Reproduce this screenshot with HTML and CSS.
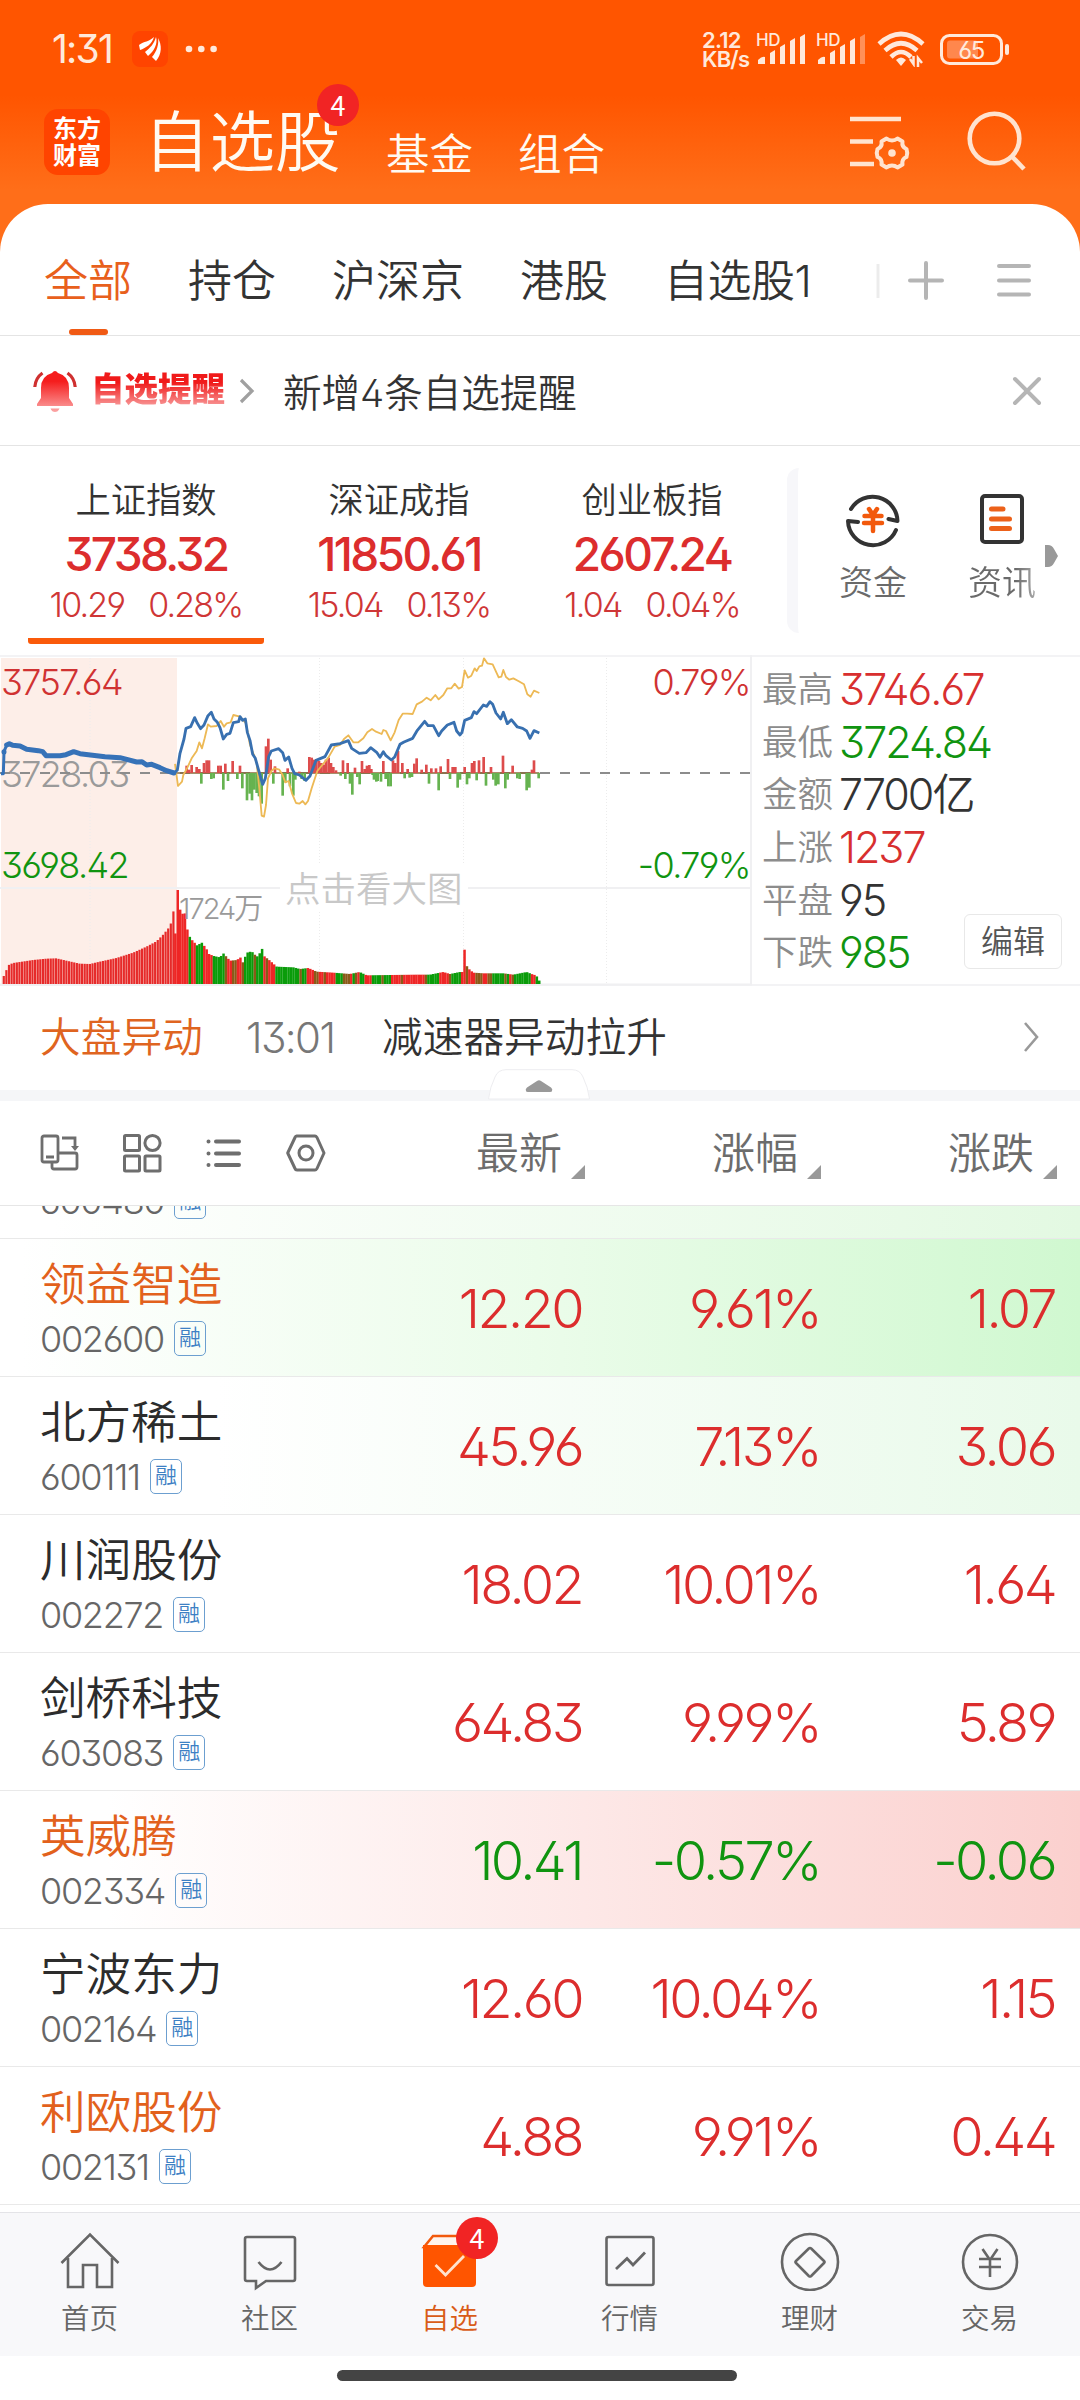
FILE: index.html
```html
<!DOCTYPE html>
<html lang="zh-CN">
<head>
<meta charset="utf-8">
<title>自选股</title>
<link rel="stylesheet" href="styles.css">
</head>
<body>
<header class="top">
  <div class="status">
    <span class="clock">1:31</span>
    <svg class="status-left" width="90" height="36" viewBox="0 0 90 36">
      <rect width="36" height="36" rx="8" fill="#ff4400"/>
      <path d="M7 14C12 10 17 11 22 6C20 13 14 17 8 19ZM13 21C18 17 22 13 24 6C26 13 22 20 16 25ZM20 26C25 20 27 13 26 7C30 14 30 23 24 30Z" fill="#fff"/>
      <g fill="#ffe9db"><circle cx="57" cy="18" r="3.3"/><circle cx="69.300" cy="18" r="3.300"/><circle cx="81.600" cy="18" r="3.300"/></g>
    </svg>
    <span class="speed">2.12<br>KB/s</span>
    <span class="hd">HD</span>
    <svg class="signal" width="50" height="32" viewBox="0 0 50 32" fill="#ffe9db">
      <path d="M2 31V27Q6 23 9 24V31ZM14 31V20L19 17V31ZM24 31V14L29 11V31ZM34 31V8L39 5V31ZM44 31V4L49 1V31Z"/>
    </svg>
    <span class="hd">HD</span>
    <svg class="signal" width="50" height="32" viewBox="0 0 50 32" fill="#ffe9db">
      <path d="M2 31V27Q6 23 9 24V31ZM14 31V20L19 17V31ZM24 31V14L29 11V31ZM34 31V8L39 5V31Z"/><path opacity=".4" d="M44 31V4L49 1V31Z"/>
    </svg>
    <svg class="wifi" width="48" height="36" viewBox="0 0 48 36" fill="none" stroke="#ffe9db" stroke-width="4.600">
      <path d="M2 13Q24 -7 46 13M8 19.500Q24 5 40 19.500M14 26Q24 16 34 26"/>
      <path d="M19 29Q24 24 29 29L24 35Z" fill="#ffe9db" stroke="none"/>
      <path d="M33 28L36.500 33V25M41 36V27L45 32" stroke-width="2.500"/>
    </svg>
    <svg class="battery" width="70" height="32" viewBox="0 0 70 32">
      <rect x="1.500" y="1.500" width="60" height="28" rx="8" fill="none" stroke="#ffe9db" stroke-width="3"/>
      <rect x="7" y="6.500" width="31" height="18" rx="3" fill="#ff874d"/>
      <rect x="65" y="10" width="4" height="11" rx="2" fill="#ffe9db"/>
      <text x="31" y="24.500" text-anchor="middle" font-size="24" fill="#ffe9db">65</text>
    </svg>
  </div>
  <div class="titles">
    <div class="logo">东方<br>财富</div>
    <h1>自选股<i class="badge">4</i></h1>
    <span class="mode m1">基金</span>
    <span class="mode m2">组合</span>
    <svg class="top-icons" width="182" height="64" viewBox="0 0 182 64" fill="none" stroke="#ffe3cf" stroke-width="4.600">
      <path d="M2 9H53M2 31.500H25M2 54H26"/>
      <path stroke-width="4" stroke-linejoin="round" d="M44 30.500Q47 30.500 49.500 28.500L54.500 31.500Q53.500 37 58.500 39Q60 43 58.500 47Q53.500 49 54.500 54.500L49.500 57.500Q47 55.500 44 55.500Q41 55.500 38.500 57.500L33.500 54.500Q34.500 49 29.500 47Q28 43 29.500 39Q34.500 37 33.500 31.500L38.500 28.500Q41 30.500 44 30.500Z"/>
      <circle cx="44" cy="43" r="3.800" fill="#ffe3cf" stroke="none"/>
      <circle cx="146.500" cy="28.500" r="24.800"/><path d="M163.500 46L176 59"/>
    </svg>
  </div>
</header>

<main class="panel">
  <nav class="tabs">
    <span class="tab on">全部</span><span class="tab">持仓</span><span class="tab">沪深京</span><span class="tab">港股</span><span class="tab">自选股1</span>
    <svg class="tab-tools" width="160" height="44" viewBox="0 0 160 44" fill="none" stroke="#b5b5b5" stroke-width="4" stroke-linecap="round">
      <path d="M3 6V40" stroke="#ececec" stroke-width="3" stroke-linecap="butt"/>
      <path d="M35 22.500H67M51 5V40M124 8H154M124 22.500H154M124 36.500H154"/>
    </svg>
  </nav>

  <section class="notice">
    <svg width="44" height="44" viewBox="0 0 44 44">
      <defs><linearGradient id="red" x1="0" y1="0" x2="0" y2="1"><stop offset=".25" stop-color="#f51d1d"/><stop offset="1" stop-color="#fba6a6"/></linearGradient></defs>
      <path fill="url(#red)" d="M19 4Q22 0 25 4Q36 7 36 19V29L40 35V37H4V35L8 29V19Q8 7 19 4ZM17.500 39.500H26.500Q25 43 22 43Q19 43 17.500 39.500Z"/>
      <path d="M9.500 4Q2.500 9 1.800 18M34.500 4Q41.500 9 42.200 18" fill="none" stroke="#cf3030" stroke-width="3.200"/>
    </svg>
    <b>自选提醒</b>
    <svg class="go" width="16" height="26" viewBox="0 0 16 26" fill="none" stroke="#a0a0a0" stroke-width="3.200"><path d="M2 2L13 13L2 24"/></svg>
    <span class="notice-text">新增4条自选提醒</span>
    <svg class="close" width="30" height="30" viewBox="0 0 30 30" stroke="#b5b5b5" stroke-width="4" stroke-linecap="round"><path d="M3 3L27 27M27 3L3 27"/></svg>
  </section>

  <section class="indices">
    <div class="index on"><h3>上证指数</h3><strong>3738.32</strong><p><span>10.29</span><span>0.28%</span></p></div>
    <div class="index"><h3>深证成指</h3><strong>11850.61</strong><p><span>15.04</span><span>0.13%</span></p></div>
    <div class="index"><h3>创业板指</h3><strong>2607.24</strong><p><span>1.04</span><span>0.04%</span></p></div>
    <div class="shortcuts">
      <div class="shortcut">
        <svg width="58" height="58" viewBox="0 0 58 58" fill="none" stroke="#333" stroke-width="4" stroke-linejoin="round" stroke-linecap="round">
          <path d="M7 19A25 25 0 0 1 53.500 31L44.500 29M52 40A25 25 0 0 1 4 31L14 32"/>
          <path stroke="#f2590c" stroke-width="4.500" d="M25 19L29 25L33 19M20.500 26H37.500M20 33H38M29 25V41"/>
        </svg><span>资金</span>
      </div>
      <div class="shortcut news">
        <svg width="58" height="58" viewBox="0 0 58 58" fill="none" stroke="#333" stroke-width="4" stroke-linecap="round">
          <rect x="9" y="6" width="40" height="46" rx="3"/><path stroke="#ec611a" stroke-width="5" d="M18.500 19H30M18.500 29H36.500M18.500 38.500H36.500"/>
        </svg><span>资讯</span>
      </div>
      <svg class="more" width="14" height="22" viewBox="0 0 14 22"><path d="M0 0H3Q7 0 9 4L13 11L9 18Q7 22 3 22H0Z" fill="#999"/></svg>
    </div>
  </section>

  <section class="market">
    <svg class="chart" width="752" height="331" viewBox="0 655 752 331">
      <rect x="1" y="658" width="176" height="326" fill="#fdeee8"/>
      <path d="M0 888H280M468 888H751M0 984.500H752M751 655V985" stroke="#f0f0f2" stroke-width="2" fill="none"/>
      <path d="M90 658V984M319.500 658V864M319.500 912V984M463.500 658V864M463.500 912V984M606.500 658V984" stroke="#ececec" stroke-dasharray="1 2" fill="none"/>
      <text x="1" y="695" class="up">3757.64</text>
      <text x="1" y="787" class="flat">3728.03</text>
      <text x="1" y="878" class="down">3698.42</text>
      <text x="750" y="695" class="up" text-anchor="end">0.79%</text>
      <text x="750" y="878" class="down" text-anchor="end">-0.79%</text>
      <path d="M0 773H752" stroke="#8c8c8c" stroke-width="2" stroke-dasharray="10 10"/>
      <g id="bars" transform="translate(0 645) scale(.33333)"></g>
      <g transform="translate(0 645) scale(.33333)" fill="none" stroke-linejoin="round">
        <path stroke="#edb955" stroke-width="5.500" d="M525 357L534 423L546 410L550 390L562 368L575 340L590 318L598 292L606 310L614 280L624 238L632 245L650 243L662 228L672 245L680 235L692 232L700 210L720 215L738 235L750 300L762 330L770 355L778 430L785 512L792 515L798 480L804 400L814 378L824 370L838 374L848 390L856 412L866 408L876 445L888 474L898 476L908 468L916 478L924 468L935 430L952 378L985 338L1004 305L1020 300L1032 282L1045 271L1060 292L1075 292L1090 280L1102 262L1116 252L1128 260L1145 267L1150 255L1158 258L1172 286L1184 262L1196 225L1208 206L1222 206L1238 207L1250 178L1266 170L1280 158L1292 166L1306 150L1316 163L1330 150L1342 130L1354 130L1364 116L1376 131L1386 126L1394 76L1404 98L1414 92L1424 70L1430 78L1438 64L1446 62L1452 40L1462 55L1478 58L1496 97L1504 95L1510 75L1518 96L1528 104L1540 100L1555 108L1572 118L1582 148L1592 155L1602 137L1618 144"/>
        <path stroke="#3870b0" stroke-width="8.500" d="M525 382L532 375L540 325L552 282L558 250L572 245L584 218L592 235L602 251L612 240L624 212L634 202L642 222L652 232L660 248L670 282L680 268L690 265L700 233L716 230L720 215L728 226L736 222L742 262L750 286L758 328L766 340L776 376L788 418L796 400L806 335L814 318L836 311L848 323L855 346L866 336L876 370L884 386L898 390L918 406L930 393L948 346L975 335L994 300L1020 296L1045 287L1055 310L1078 325L1098 323L1112 308L1130 322L1140 337L1150 320L1158 332L1174 345L1184 336L1200 298L1212 291L1238 280L1252 256L1274 229L1284 242L1300 242L1316 272L1325 258L1342 240L1362 232L1370 258L1380 270L1386 262L1394 226L1414 218L1422 200L1430 206L1450 180L1460 184L1470 170L1478 178L1488 204L1502 222L1510 202L1522 236L1534 224L1552 246L1568 250L1580 258L1590 280L1602 257L1618 264"/>
        <path stroke="#3672b8" stroke-width="9" d="M3 386H10L12 320L20 300"/>
        <path stroke="#3672b8" stroke-width="15" stroke-linecap="round" d="M12 320V321M20 300L28 296L38 301L60 303L80 313L115 317L128 320L138 332L180 332L198 329L221 320L240 326L315 335L360 338L410 351L426 350L440 360L455 358L480 368L500 377L522 384"/>
      </g>
      <text x="179" y="919" class="volume">1724万</text>
      <text x="285" y="902" class="hint">点击看大图</text>
    </svg>
    <dl class="stats">
      <dt>最高</dt><dd class="up">3746.67</dd>
      <dt>最低</dt><dd class="down">3724.84</dd>
      <dt>金额</dt><dd>7700亿</dd>
      <dt>上涨</dt><dd class="up">1237</dd>
      <dt>平盘</dt><dd>95</dd>
      <dt>下跌</dt><dd class="down">985</dd>
    </dl>
    <button class="edit">编辑</button>
  </section>

  <section class="flash">
    <span class="flash-tag">大盘异动</span><time>13:01</time><span class="flash-text">减速器异动拉升</span>
    <svg class="flash-go" width="16" height="30" viewBox="0 0 16 30" fill="none" stroke="#999" stroke-width="2.600"><path d="M2 1L14 15L2 29"/></svg>
    <svg class="handle" width="102" height="32" viewBox="0 0 102 32"><path d="M.5 30Q2 18 7 8Q10 .7 18 .7H84Q92 .7 95 8Q100 18 101.500 30Z" fill="#fff" stroke="#ededf0"/><path d="M38 22Q37 20 39 18.500L49 12Q51 10.500 53 12L63 18.500Q65 20 64 22Q64 23 62 23H40Q38 23 38 22Z" fill="#999"/></svg>
  </section>

  <section class="table-head">
    <div class="tools">
      <svg width="40" height="40" viewBox="0 0 40 40" fill="none" stroke="#6e6e6e" stroke-width="2.800"><rect x="2" y="3" width="16" height="26" rx="2"/><path d="M6 24H14M12 30V34Q12 36 14 36H35Q37 36 37 34V22Q37 20 35 20H19M22 5H35V13"/><path d="M31 13H39L35 18Z" fill="#6e6e6e" stroke="none"/></svg>
      <svg width="40" height="40" viewBox="0 0 40 40" fill="none" stroke="#6e6e6e" stroke-width="3"><rect x="2.500" y="2.500" width="15" height="15" rx="1"/><circle cx="30.500" cy="10" r="7.600"/><rect x="2.500" y="23" width="15" height="15" rx="1"/><rect x="23" y="23" width="15" height="15" rx="1"/></svg>
      <svg width="40" height="40" viewBox="0 0 40 40" fill="none" stroke="#6e6e6e" stroke-width="4" stroke-linecap="round"><path d="M12 8.500H35M12 20.500H35M12 32H35M4.500 8.500V8.600M4.500 20.500V20.600M4.500 32V32.100"/></svg>
      <svg width="40" height="40" viewBox="0 0 40 40" fill="none" stroke="#6e6e6e" stroke-width="3" stroke-linejoin="round"><path d="M10.500 3H29Q30 3 31 4.500L38 20L31 35.500Q30 37 29 37H11Q9.500 37 9 35.500L1.700 20L9 4.500Q9.500 3 10.500 3Z"/><circle cx="20" cy="20" r="7"/></svg>
    </div>
    <span class="sort c1">最新</span><span class="sort c2">涨幅</span><span class="sort c3">涨跌</span>
  </section>

  <section class="list">
    <div class="row first"><div class="name"><p>600480<em>融</em></p></div></div>
    <div class="row green held"><div class="name"><h2>领益智造</h2><p>002600<em>融</em></p></div><b>12.20</b><b>9.61%</b><b>1.07</b></div>
    <div class="row pale"><div class="name"><h2>北方稀土</h2><p>600111<em>融</em></p></div><b>45.96</b><b>7.13%</b><b>3.06</b></div>
    <div class="row"><div class="name"><h2>川润股份</h2><p>002272<em>融</em></p></div><b>18.02</b><b>10.01%</b><b>1.64</b></div>
    <div class="row"><div class="name"><h2>剑桥科技</h2><p>603083<em>融</em></p></div><b>64.83</b><b>9.99%</b><b>5.89</b></div>
    <div class="row pink held fall"><div class="name"><h2>英威腾</h2><p>002334<em>融</em></p></div><b>10.41</b><b>-0.57%</b><b>-0.06</b></div>
    <div class="row"><div class="name"><h2>宁波东力</h2><p>002164<em>融</em></p></div><b>12.60</b><b>10.04%</b><b>1.15</b></div>
    <div class="row held"><div class="name"><h2>利欧股份</h2><p>002131<em>融</em></p></div><b>4.88</b><b>9.91%</b><b>0.44</b></div>
  </section>
</main>

<footer class="bottom">
  <nav>
    <a><svg width="60" height="60" viewBox="0 0 60 60"><path d="M1.500 32L30 3.500L58.500 32M8 27V56H23V34H37V56H52V27"/></svg>首页</a>
    <a><svg width="60" height="60" viewBox="0 0 60 60"><path d="M7 6H53Q55 6 55 8V48Q55 50 53 50H26L16 57V50H7Q5 50 5 48V8Q5 6 7 6Z"/><path d="M18.500 31Q30 46 41.500 31"/></svg>社区</a>
    <a class="on"><svg width="60" height="60" viewBox="0 0 60 60"><path d="M4 16L13 5H47L55 16Z" fill="#fff4ed" stroke="#f2590c" stroke-width="2.500"/><path d="M3 14H56V52Q56 56 52 56H7Q3 56 3 52Z" fill="#f50" stroke="none"/><path d="M15.500 34L25.500 44L44 25" stroke="#ffe3cf" stroke-width="2.800"/></svg>自选<i class="badge">4</i></a>
    <a><svg width="60" height="60" viewBox="0 0 60 60"><rect x="6.500" y="6" width="47" height="48" rx="2"/><path d="M16 38L27 27.500L33 34L45 21.500" stroke-width="2.800"/></svg>行情</a>
    <a><svg width="60" height="60" viewBox="0 0 60 60"><circle cx="30" cy="31" r="28"/><path d="M28.800 17.500Q30 16.500 31.200 17.500L44 30Q45 31 44 32L31.200 45Q30 46 28.800 45L16 32Q15 31 16 30Z"/></svg>理财</a>
    <a><svg width="60" height="60" viewBox="0 0 60 60"><circle cx="30" cy="31" r="27"/><path d="M22.500 18L30 29L37.500 18M19 28H41M19 36H41M30 29V46"/></svg>交易</a>
  </nav>
  <div class="gesture"></div>
</footer>
<script src="chart.js"></script>
</body>
</html>
```
FILE: styles.css
```css
* { box-sizing: border-box; margin: 0; padding: 0; }
body { width: 1080px; height: 2400px; overflow: hidden; background: #fff; color: #333;
  font-family: Inter, "Noto Sans CJK SC", sans-serif; font-weight: 350; font-feature-settings: "ss01"; }
h1, h2, h3, b, i, em { font-weight: 350; font-style: normal; }
svg { display: block; flex: none; }
.up { color: #d82f2f; fill: #d03232; }
.down { color: #109410; fill: #109410; }

.top { height: 254px; background: linear-gradient(#f50 0, #f50 95px, #ff6e19 190px); color: #fffaf2; }
.status { display: flex; height: 98px; padding: 31px 0 0 52px; color: #ffe9db; }
.clock { width: 80px; font-size: 39px; line-height: 36px; font-weight: 400; letter-spacing: -1.800px; }
.speed { width: 54px; margin-left: 480px; font-size: 22px; line-height: 19px; font-weight: 600; letter-spacing: -.8px; }
.hd { width: 0; font-size: 17px; line-height: 19px; font-weight: 500; letter-spacing: -.5px; overflow: visible; white-space: nowrap; }
.signal { margin: 2px 10px 0 0; }
.wifi { margin-left: 1px; }
.battery { margin: 3px 0 0 15px; font-weight: 400; letter-spacing: -1.500px; }
.titles { display: flex; height: 106px; padding-left: 44px; }
.logo { width: 66px; height: 66px; margin-top: 11px; padding-top: 6px; border-radius: 14px; background: #ff4400; color: #fff; font-size: 24px; line-height: 27px; font-weight: 700; text-align: center; }
h1 { position: relative; width: 242px; margin-left: 34px; padding-top: 3px; font-size: 65.500px; line-height: 84px; }
.badge { position: absolute; width: 42px; height: 42px; border-radius: 50%; background: #f12424; color: #fff; font-size: 27px; line-height: 42px; text-align: center; font-weight: 400; font-family: "Noto Sans CJK SC", sans-serif; }
h1 .badge { left: 173px; top: -14px; }
.mode { width: 132px; padding-top: 30px; font-size: 43.500px; line-height: 52px; }
.m1 { padding-left: 0; }
.m2 { width: 330px; padding-left: 0; }
.top-icons { margin-top: 12px; }

.panel { position: relative; margin-top: -50px; border-radius: 48px 48px 0 0; background: #fff; }
.tabs { display: flex; height: 132px; padding: 47px 0 0 44px; border-bottom: 1.500px solid #e4e4e4; font-size: 44px; line-height: 60px; }
.tab { position: relative; margin-right: 56px; white-space: nowrap; }
.tab:nth-child(5) { letter-spacing: -.5px; width: 151px; margin-right: 0; }
.tab.on { color: #e8601c; }
.tab.on::after { content: ""; position: absolute; left: 25px; bottom: 0; width: 39px; height: 6px; border-radius: 3px; background: #f05a14; }
.tab-tools { margin: 7px 0 0 60px; }
.notice { display: flex; align-items: center; height: 110px; padding-left: 33px; border-bottom: 1.500px solid #e4e4e4; }
.notice b { width: 134px; margin: -4px 0 0 14px; font-size: 33.500px; line-height: 44px; font-weight: 900; white-space: nowrap; background: linear-gradient(#f01a1a 35%, #f89a9a 90%); -webkit-background-clip: text; color: transparent; }
.notice .go { margin-left: 14px; }
.notice-text { width: 729px; margin: -2px 0 0 28px; font-size: 38.500px; }
.indices { display: flex; height: 209px; padding: 22px 0 0 28px; }
.index { width: 236px; margin-right: 17px; height: 176px; text-align: center; white-space: nowrap; }
.index.on { border-bottom: 6px solid #fa5a0a; border-radius: 0 0 3px 3px; }
.index h3 { font-size: 35.300px; line-height: 66px; }
.index strong { display: block; font-size: 46px; line-height: 40px; font-weight: 480; letter-spacing: -2.600px; color: #dc2d2d; }
.index p { display: flex; justify-content: center; gap: 24px; font-size: 34px; line-height: 62px; letter-spacing: -1.800px; color: #cf3636; }
.shortcuts { position: relative; display: flex; width: 293px; height: 165px; border-left: 11px solid #f7f7fa; border-radius: 12px 0 0 12px; }
.shortcut { display: flex; flex-direction: column; align-items: center; width: 70px; margin: 22px 0 0 40px; font-size: 34px; line-height: 44px; color: #6a6a6a; }
.shortcut span { margin-top: 13px; }
.news { margin-left: 59px; }
.news span { background: linear-gradient(90deg, #6a6a6a 70%, #aaa); -webkit-background-clip: text; color: transparent; }
.more { position: absolute; left: 247px; top: 77px; }

.market { position: relative; display: flex; height: 331px; border-top: 2px solid #f3f3f5; border-bottom: 2px solid #f3f3f5; }
.chart { margin-top: -2px; font-size: 36px; letter-spacing: -1.600px; }
.flat, .volume { fill: #9a9a9a; }
.volume { font-size: 29px; letter-spacing: -2px; }
.hint { font-size: 35.500px; letter-spacing: 0; fill: #c8c8c8; }
.stats { display: grid; grid-template-columns: 77px 1fr; grid-auto-rows: 52.700px; padding: 6px 0 0 10px; line-height: 53px; white-space: nowrap; }
.stats dt { font-size: 35.500px; color: #8c8c8c; }
.stats dd { font-size: 43px; letter-spacing: -2px; }
.edit { position: absolute; left: 964px; top: 257px; width: 98px; height: 55px; padding-bottom: 5px; border: 1px solid #e8e8e8; border-radius: 6px; background: #fff; font: 350 32px/46px "Noto Sans CJK SC", sans-serif; color: #555; }

.flash { position: relative; display: flex; height: 115px; border-bottom: 11px solid #f5f6f8; padding-left: 40px; font-size: 40.700px; line-height: 104px; }
.flash-tag { width: 206px; color: #df6420; }
.flash time { width: 136px; font-size: 42px; letter-spacing: -1.600px; color: #777; }
.flash-text { width: 641px; }
.flash-go { margin-top: 36px; }
.handle { position: absolute; left: 488px; top: 83px; }
.table-head { display: flex; height: 105px; border-bottom: 1.500px solid #e6e6e6; background: #fff; font-size: 43px; line-height: 104px; color: #6c6c6c; }
.tools { display: flex; gap: 42px; width: 476px; padding: 32px 0 0 40px; }
.sort { position: relative; width: 109px; margin-right: 127px; white-space: nowrap; }
.sort::after { content: ""; position: absolute; right: 0; top: 64px; border: 7px solid; border-color: transparent #999 #999 transparent; }
.c3 { margin: 0; }

.list { height: 999px; }
.row { display: flex; align-items: center; height: 138px; padding: 1px 0 0 40px; border-bottom: 1.500px solid #e9e9e9; color: #dc2d2d; }
.row.first { height: 33px; padding-bottom: 11px; overflow: hidden; align-items: flex-end; background: linear-gradient(90deg, #fff 5%, #e3f9e2); }
.row.green { background: linear-gradient(90deg, #fff 2%, #eafce9 52%, #d0f8d0); }
.row.pale { background: linear-gradient(90deg, #fff 20%, #e9faea); }
.row.pink { background: linear-gradient(90deg, #fff 10%, #fbd0ce); }
.row.fall { color: #109410; }
.name { width: 304px; padding-top: 5px; color: #333; }
.name h2 { font-size: 45.600px; line-height: 56px; color: #2c2c2c; }
.held h2 { color: #e2611c; }
.name p { display: flex; align-items: center; height: 52px; font-size: 36px; letter-spacing: -1.300px; color: #666; }
.name em { width: 32px; height: 35px; margin-left: 10px; border: 1.500px solid #6c9fd0; border-radius: 5px; font-size: 22px; line-height: 31px; letter-spacing: 0; text-align: center; color: #3d80c4; }
.row > b { width: 238px; font-size: 54px; letter-spacing: -2.600px; text-align: right; }
.row > b:last-child { width: 235px; }

.bottom { position: absolute; left: 0; top: 2212px; width: 1080px; height: 188px; background: #fff; }
.bottom nav { display: flex; height: 144px; border-top: 1.500px solid #e4e4e8; background: #f8f8fa; }
.bottom a { position: relative; display: flex; flex-direction: column; align-items: center; gap: 8px; width: 180px; padding: 18px 1px 0 0; font-size: 28.500px; line-height: 40px; color: #666; }
.bottom a svg { fill: none; stroke: #666; stroke-width: 2.600; }
.bottom a.on { color: #d95c18; }
.bottom .badge { left: 96px; top: 4px; }
.gesture { width: 400px; height: 11px; margin: 14px 0 0 337px; border-radius: 6px; background: #444; }
```
FILE: chart.js
```js
// Bars are in thirds of a pixel: zero line at 384, volume floor at 1017.
const flow = [[560,22],[567,10],[575,24],[590,18],[598,12],[612,30],[620,38],[627,38],[655,22],[662,22],[676,28],[698,36],[720,22],[798,80],[805,103],[812,40],[825,20],[863,14],[898,4],[928,48],[935,46],[942,40],[949,42],[957,36],[964,30],[971,25],[978,40],[986,46],[993,30],[1000,18],[1008,8],[1029,38],[1043,30],[1065,16],[1086,36],[1094,12],[1101,22],[1108,24],[1114,12],[1150,36],[1179,38],[1186,30],[1194,66],[1207,30],[1223,12],[1243,28],[1250,44],[1265,10],[1279,25],[1294,14],[1308,14],[1322,20],[1344,42],[1358,18],[1366,18],[1394,18],[1416,30],[1423,36],[1437,38],[1451,48],[1473,18],[1509,52],[1538,22],[1596,10],[1602,38],
[604,-32],[634,-18],[641,-16],[670,-50],[684,-24],[712,-18],[727,-46],[741,-82],[749,-62],[756,-82],[763,-50],[770,-60],[777,-70],[785,-92],[820,-32],[848,-68],[856,-28],[870,-40],[880,-68],[886,-20],[905,-18],[914,-24],[1022,-8],[1036,-18],[1050,-32],[1057,-65],[1072,-12],[1079,-34],[1118,-6],[1126,-18],[1133,-24],[1122,-20],[1129,-26],[1143,-26],[1157,-18],[1165,-40],[1172,-40],[1214,-16],[1229,-14],[1236,-12],[1287,-32],[1316,-52],[1350,-18],[1373,-44],[1380,-20],[1401,-34],[1408,-16],[1430,-22],[1458,-38],[1480,-20],[1487,-38],[1495,-34],[1516,-46],[1523,-20],[1552,-16],[1559,-18],[1580,-52],[1588,-44],[1616,-16]];
const volume = [[12,24],[20,42],[28,58],[40,63],[60,66],[100,72],[140,76],[170,77],[200,70],[240,61],[270,60],[300,67],[350,78],[400,94],[440,112],[470,128],[490,148],[505,166],[515,185],[521,218],[528,125],[533,284],[540,224],[547,210],[554,218],[562,164],[569,142],[576,132],[591,116],[606,124],[620,104],[627,90],[641,84],[660,80],[670,92],[690,70],[712,72],[720,82],[728,64],[741,94],[755,98],[770,82],[777,86],[785,110],[792,84],[810,70],[830,52],[880,50],[900,45],[925,48],[950,37],[1000,34],[1050,30],[1079,36],[1100,26],[1250,28],[1290,28],[1330,36],[1350,30],[1380,36],[1387,36],[1394,107],[1401,52],[1408,44],[1420,34],[1450,32],[1510,32],[1540,28],[1580,36],[1600,28],[1609,26],[1617,8]];
const green = [[566,573],[587,608],[637,672],[735,760],[770,790],[826,895],[903,920],[1008,1025],[1055,1062],[1076,1092],[1118,1145],[1152,1175],[1284,1320],[1355,1380],[1476,1512],[1522,1530],[1542,1590],[1604,1620]];
const mixed = [[673,684],[697,712],[725,733],[761,768],[799,806],[896,902],[945,953],[968,980],[1028,1050],[1064,1074],[1146,1151],[1204,1212],[1272,1282],[1344,1352],[1396,1406],[1424,1450],[1460,1474],[1514,1520],[1532,1540]];
const within = (list, x) => list.some(([a, b]) => x >= a && x <= b);
const heightAt = x => {
  const i = Math.max(1, volume.findIndex(p => p[0] >= x));
  const [a, p] = volume[i - 1], [b, q] = volume[i];
  return p + (q - p) * Math.max(0, x - a) / (b - a);
};
let out = '<path d="M530 384H1618" stroke="#8a6a3a" stroke-width="4"/>';
for (const [x, v] of flow)
  out += `<rect x="${x - 4}" y="${v > 0 ? 384 - v : 384}" width="8" height="${Math.abs(v)}" fill="${v > 0 ? '#dd4c4c' : '#66b350'}"/>`;
for (let x = 12; x < 524; x += 7.830)
  out += `<rect x="${x - 4}" y="${1017 - heightAt(x)}" width="6.600" height="${heightAt(x)}" fill="#e62a2a"/>`;
for (let k = 0; k < 152; k++) {
  const x = 526 + k * 7.230, h = heightAt(Math.min(x, 1616));
  const fill = within(mixed, x) ? '#8a5a18' : within(green, x) ? '#0a9c0a' : '#ee2626';
  out += `<rect x="${x - 3.700}" y="${1017 - h}" width="7.500" height="${h}" fill="${fill}"/>`;
}
document.getElementById('bars').innerHTML = out;
```
